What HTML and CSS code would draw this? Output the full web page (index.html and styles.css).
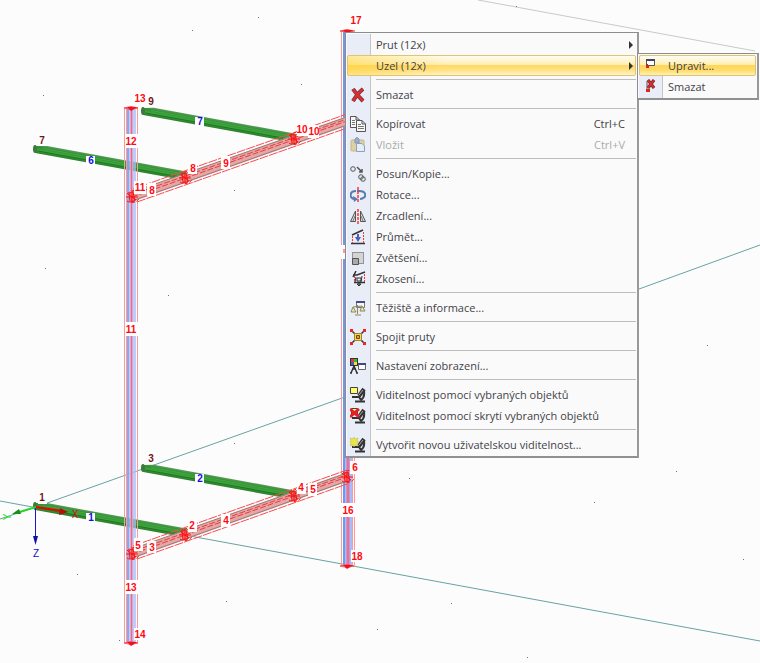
FILE: index.html
```html
<!DOCTYPE html>
<html lang="cs">
<head>
<meta charset="utf-8">
<title>Model</title>
<link rel="stylesheet" href="styles.css">
</head>
<body>
<main class="workspace">
<svg class="scene" viewBox="0 0 760 663" preserveAspectRatio="xMinYMin meet" role="img" aria-label="Model">
  <defs>
    <linearGradient id="tube" x1="0" y1="0" x2="0" y2="1">
      <stop offset="0" stop-color="#5c9c5c"/><stop offset=".3" stop-color="#2f8f2f"/><stop offset=".6" stop-color="#3fa53f"/><stop offset="1" stop-color="#2a782a"/>
    </linearGradient>
    <g id="member">
      <g transform="rotate(10.3)">
        <path d="M0-3 10-5H153V4H1Z" fill="url(#tube)"/>
        <path d="M3 1.500H152" stroke="#1b7b1b"/>
        <path d="M8-2H152" stroke="#43a843"/>
      </g>
      <ellipse cx="0" cy="0" rx="2" ry="4" fill="#3e7a3e"/>
    </g>
    <g id="node" fill="none" stroke="#ff1010">
      <path d="M-3-4 1-5 3 4-2 5Z" fill="#e03030" fill-opacity=".35"/>
      <path d="M-6 0H6M0-4V4M-4-3 4 3"/>
      <path d="M-5 4Q2 8 7 2M-5-3Q0-8 7-6" stroke-dasharray="3 2"/>
    </g>
    <g id="cap" fill="#f01020">
      <path d="M-7 0Q0-3 7 0Q0 3-7 0Z" fill="none" stroke="#ff5050"/>
      <path d="M-4-1H6L0 3Z"/>
    </g>
  </defs>

  <g fill="none" stroke="#68a2a2">
    <path d="M0 501 760 641"/><path d="M0 519 36 507 345 397 639 289 760 245"/>
    <path d="M478 0 755 51" stroke="#c9c9c9"/>
  </g>

  <use href="#member" x="35" y="149"/>
  <use href="#member" x="143" y="111"/>
  <use href="#member" x="35" y="506"/>
  <use href="#member" x="143" y="468"/>

  <g>
    <rect x="127" y="107" width="9" height="536" fill="#9fc0ff" fill-opacity=".75"/>
    <path d="M128 107V643" stroke="#7ba0ec" stroke-opacity=".8" stroke-width="2"/>
    <path d="M131.500 107V643" stroke="#f29ab8" stroke-opacity=".8" stroke-width="3"/>
    <path d="M131.500 107V643" stroke="#ed5979" stroke-opacity=".8"/>
    <path d="M124.500 107V643M126.500 107V643M137.500 107V643" stroke="#ff9999"/>
    <rect x="343" y="30" width="9" height="536" fill="#9fc0ff"/>
    <path d="M344 30V566" stroke="#6f98ea" stroke-width="2"/>
    <path d="M348 30V566" stroke="#ed6f96" stroke-width="3"/>
    <path d="M341.500 30V566M352.500 30V566M354.500 30V566" stroke="#ff9999"/>
  </g>

  <g fill="none">
    <path d="M132 197 347 121M132 554 347 477" stroke="#e5a6a6" stroke-width="9"/>
    <path d="M132 192 347 117M132 201 347 125M132 549 347 473M132 558 347 481" stroke="#977b7b"/>
    <path d="M133 189 347 114M137 202 347 128M133 546 347 470M137 559 347 484" stroke="#ff4a4a" stroke-dasharray="9 1"/>
    <path d="M132 197 347 121M132 554 347 477M134 194 347 119M134 551 347 475" stroke="#ec3a3a" stroke-dasharray="6 2"/>
  </g>
  <g>
    <use href="#node" x="132" y="197"/><use href="#node" x="185" y="178"/><use href="#node" x="294" y="139"/>
    <use href="#node" x="132" y="554"/><use href="#node" x="185" y="535"/><use href="#node" x="294" y="496"/><use href="#node" x="347" y="477"/>
    <use href="#cap" x="131" y="108"/><use href="#cap" x="131" y="643"/><use href="#cap" x="347" y="31"/><use href="#cap" x="347" y="566"/>
  </g>

  <g fill="none" stroke-width="2">
    <path d="M36 507 16 513" stroke="#2ad42a"/><path d="M12 514 19 509 21 514Z" fill="#189018" stroke="none"/>
    <path d="M36 507 62 511" stroke="#f00000"/><path d="M60 508 68 512 59 515Z" fill="#b01010" stroke="none"/>
    <path d="M35.500 508V538" stroke="#1818d0" stroke-width="1"/><path d="M33 536H38L35.500 545Z" fill="#1010b0" stroke="none"/>
  </g>
  <g class="axis-name">
    <text x="75" y="518" fill="#cc1010">X</text><text x="36" y="557" fill="#1010d0">Z</text>
    <text transform="translate(4 517) rotate(-90)" fill="#10e010" y="7">Y</text>
  </g>

  <g fill="#fff">
    <path d="M125 134h14v14h-14zM125 322h14v14h-14zM125 580h14v14h-14zM134 93h12v12h-12zM134 628h12v12h-12zM134 181h12v13h-12zM147 183h9v13h-9zM188 161h9v13h-9zM221 156h9v13h-9zM297 124h12v12h-12zM308 125h11v13h-11zM86 156h9v9h-9zM195 117h9v9h-9zM195 474h9v9h-9zM86 513h9v9h-9zM134 538h9v13h-9zM147 541h9v12h-9zM188 520h9v12h-9zM221 514h9v13h-9zM297 481h9v13h-9zM308 483h9v13h-9zM350 461h9v13h-9zM341 503h14v14h-14zM351 550h12v12h-12zM351 15h12v12h-12zM341 245h5v14h-5z"/>
    <path d="M38 134h9v12h-9zM147 95h9v12h-9zM38 492h9v12h-9zM147 452h9v12h-9z"/>
  </g>
  <path d="M344 249v4" stroke="#f33"/>
  <g class="tag tag-selected">
    <text x="356" y="24">17</text><text x="140" y="102">13</text><text x="131" y="145">12</text>
    <text x="140" y="191">11</text><text x="152" y="194">8</text><text x="193" y="172">8</text>
    <text x="226" y="167">9</text><text x="302" y="133">10</text><text x="314" y="135">10</text>
    <text x="131" y="333">11</text><text x="131" y="591">13</text><text x="140" y="638">14</text>
    <text x="138" y="549">5</text><text x="152" y="551">3</text><text x="192" y="529">2</text>
    <text x="226" y="524">4</text><text x="301" y="491">4</text><text x="313" y="493">5</text>
    <text x="355" y="471">6</text><text x="348" y="514">16</text><text x="357" y="560">18</text>
  </g>
  <g class="tag tag-node">
    <text x="42" y="144">7</text><text x="151" y="105">9</text><text x="42" y="501">1</text><text x="151" y="462">3</text>
  </g>
  <g class="tag tag-member">
    <text x="91" y="164">6</text><text x="200" y="125">7</text><text x="200" y="482">2</text><text x="91" y="521">1</text>
  </g>
  <path fill="#777" d="M43 95h1v1h-1zM168 295h1v1h-1zM45 268h1v1h-1zM234 443h1v1h-1zM77 574h1v1h-1zM119 640h1v1h-1zM226 601h1v1h-1zM258 17h1v1h-1zM301 84h1v1h-1zM409 478h1v1h-1zM707 345h1v1h-1zM594 502h1v1h-1zM676 471h1v1h-1zM451 603h1v1h-1zM377 629h1v1h-1zM527 657h1v1h-1zM743 559h1v1h-1zM192 30h1v1h-1zM234 190h1v1h-1zM516 6h1v1h-1z"/>
</svg>

<ul class="menu menu-main">
  <li><button class="item" type="button"><span class="icon"></span>Prut (12x)<span class="arrow"></span></button></li>
  <li><button class="item active" type="button"><span class="icon"></span>Uzel (12x)<span class="arrow"></span></button></li>
  <li class="sep"></li>
  <li><button class="item" type="button"><svg class="icon" viewBox="0 0 16 16"><path d="M3 2Q7 8 13 14M13 2Q8 6 3 14" stroke="#6d3033" stroke-width="4"/><path d="M3 2Q7 8 13 14M13 2Q8 6 3 14" stroke="#d82f37" stroke-width="2.500"/></svg>Smazat</button></li>
  <li class="sep"></li>
  <li><button class="item" type="button"><svg class="icon" viewBox="0 0 16 16"><g fill="#f8f8f8" stroke="#555"><path d="M.5.500H6L9.500 4V11.500H.5ZM6 .5V4H9.500"/><path d="M6.500 4.500H12L15.500 8V15.500H6.500ZM12 4.500V8H15.500"/></g><path d="M2 4.500H5M2 6.500H5M2 8.500H5M8 8.500H11M8 10.500H14M8 12.500H14" stroke="#777"/></svg>Kopírovat<kbd>Ctrl+C</kbd></button></li>
  <li><button class="item" type="button" disabled><svg class="icon" viewBox="0 0 16 16"><rect x="1" y="3" width="13" height="11" rx="1" fill="#ddd1a1" stroke="#c1b88f"/><path d="M5 6V2Q7-1 9 2V6Z" fill="#9caed4" stroke="#8293b7"/><path d="M6.500 6.500H12L14.500 9V14.500H6.500Z" fill="#e7edf7" stroke="#8ea0bb"/></svg>Vložit<kbd>Ctrl+V</kbd></button></li>
  <li class="sep"></li>
  <li><button class="item" type="button"><svg class="icon" viewBox="0 0 16 16"><g fill="none" stroke="#555"><circle cx="3" cy="3" r="2.300"/><circle cx="11" cy="11" r="2.300"/><circle cx="13" cy="13" r="2.300"/><path d="M7 1 12 6M12 3V6H9" stroke-width="1.500"/></g></svg>Posun/Kopie...</button></li>
  <li><button class="item" type="button"><svg class="icon" viewBox="0 0 16 16"><path d="M6 4C-1 4-1 12 5 12M7 4C18 3 17 12 10 12" fill="none" stroke="#547caf" stroke-width="2"/><path d="M3 9 8 12 4 15Z" fill="#547caf"/><path d="M8 0V16" stroke="#f33" stroke-width="1.500" stroke-dasharray="3 1"/></svg>Rotace...</button></li>
  <li><button class="item" type="button"><svg class="icon" viewBox="0 0 16 16"><path d="M5.500 3V13.500H.5ZM10.500 3V13.500H15.500Z" fill="#ddd" stroke="#555"/><path d="M3 13 5 8M13 13 11 8" stroke="#777"/><path d="M8 1V16" stroke="#f33" stroke-width="1.500" stroke-dasharray="3 1"/></svg>Zrcadlení...</button></li>
  <li><button class="item" type="button"><svg class="icon" viewBox="0 0 16 16"><path d="M2 6 13 1M1 14.500H15" stroke="#333" stroke-width="1.500"/><path d="M2.500 7V14M13.500 3V14" stroke="#f33" stroke-dasharray="2 1"/><path d="M7 5H9V8H11L8 13 5 8H7Z" fill="#4263b5"/></svg>Průmět...</button></li>
  <li><button class="item" type="button"><svg class="icon" viewBox="0 0 16 16"><path d="M2.500 2.500H13.500V13.500H2.500Z" fill="#d4d4d4" stroke="#444" stroke-dasharray="1 1"/><path d="M2.500 8.500H8.500V14.500H2.500Z" fill="#aaa" stroke="#555"/></svg>Zvětšení...</button></li>
  <li><button class="item" type="button"><svg class="icon" viewBox="0 0 16 16"><g stroke="#333" fill="none"><path d="M3 4H7L15 1M6 0 3 6M4 11.500H15" stroke-width="1.500"/><path d="M9 11V15M7 13H11L9 15Z"/><path d="M6 6 5 11M12 5 11 11M7 7H11V10H7Z"/></g><path d="M4.500 5V11M14.500 3V11" stroke="#f33" stroke-dasharray="2 1"/></svg>Zkosení...</button></li>
  <li class="sep"></li>
  <li><button class="item" type="button"><svg class="icon" viewBox="0 0 16 16"><path d="M6.500 1.500H14.500V7.500H6.500Z" fill="#f7f7fa" stroke="#777"/><path d="M6 2H15" stroke="#464b87" stroke-width="2"/><g fill="#eee7ba" stroke="#8d875d"><path d="M3 7 12 6M7.500 5V14M5 15H11M3 7 1 12H6ZM12 6 10 11H15Z"/></g></svg>Těžiště a informace...</button></li>
  <li class="sep"></li>
  <li><button class="item" type="button"><svg class="icon" viewBox="0 0 16 16"><path d="M2 2 14 14M14 2 2 14" stroke="#333" stroke-width="1.500"/><path d="M0 0H3V3H0ZM13 0H16V3H13ZM0 13H3V16H0ZM13 13H16V16H13Z" fill="#ed2424"/><path d="M4.500 4.500H11.500V11.500H4.500Z" fill="#ffd93b" stroke="#998440"/><path d="M6.500 6.500H9.500V9.500H6.500Z" fill="#dca226" stroke="#664c20"/></svg>Spojit pruty</button></li>
  <li class="sep"></li>
  <li><button class="item" type="button"><svg class="icon" viewBox="0 0 16 16"><path d="M0 0H8V8H0Z" fill="#333"/><path d="M1 1H4V4H1Z" fill="#e33"/><path d="M4 1H7V4H4Z" fill="#3b3"/><path d="M1 4H4V7H1Z" fill="#36c"/><path d="M4 4H7V7H4Z" fill="#fd2"/><path d="M4 8 1 15M4 8 7 15M2 11H6M0 15H2M6 15H8" stroke="#333" stroke-width="1.500"/><path d="M8.500 5.500H15.500V11.500H8.500Z" fill="#fff" stroke="#666"/><path d="M8 6H16" stroke="#424884" stroke-width="2"/></svg>Nastavení zobrazení...</button></li>
  <li class="sep"></li>
  <li><button class="item" type="button"><svg class="icon" viewBox="0 0 16 16"><path d="M14 2 9 9" stroke="#333" stroke-width="4"/><path d="M14 4Q15 10 11 13M5 14.500H15M2 10H9L11 13" stroke="#333" stroke-width="2"/><path d="M13 3 9 8" stroke="#aaa"/><path d="M.5.500H7.500V6.500H.5Z" fill="#ffff68" stroke="#444"/></svg>Viditelnost pomocí vybraných objektů</button></li>
  <li><button class="item" type="button"><svg class="icon" viewBox="0 0 16 16"><path d="M14 2 9 9" stroke="#333" stroke-width="4"/><path d="M14 4Q15 10 11 13M5 14.500H15M2 10H9L11 13" stroke="#333" stroke-width="2"/><path d="M13 3 9 8" stroke="#aaa"/><path d="M1.500.5H7.500V6.500H1.500Z" fill="#ffff68" stroke="#444"/><path d="M0 1 9 9M9 1 0 9" stroke="#e52025" stroke-width="3"/></svg>Viditelnost pomocí skrytí vybraných objektů</button></li>
  <li class="sep"></li>
  <li><button class="item" type="button"><svg class="icon" viewBox="0 0 16 16"><path d="M14 2 9 9" stroke="#333" stroke-width="4"/><path d="M14 4Q15 10 11 13M5 14.500H15M2 10H9L11 13" stroke="#333" stroke-width="2"/><path d="M13 3 9 8" stroke="#aaa"/><path d="M4 0 5 2 8 1 7 4 9 5 7 6 8 9 5 8 4 10 3 8 0 9 1 6 0 5 1 4 0 1 3 2Z" fill="#e9e64a" stroke="#b9b64b" stroke-width=".5"/></svg>Vytvořit novou uživatelskou viditelnost...</button></li>
</ul>

<ul class="menu menu-sub">
  <li><button class="item active" type="button"><svg class="icon" viewBox="0 0 16 16"><path d="M4.500 1.500H12.500V7.500H4.500Z" fill="#fff" stroke="#555"/><path d="M4 2H13" stroke="#3e4272" stroke-width="2"/><path d="M5 6V9" stroke="#555" stroke-width="2"/><path d="M4 7H7V10H4Z" fill="#d72222"/></svg>Upravit...</button></li>
  <li><button class="item" type="button"><svg class="icon" viewBox="0 0 16 16"><path d="M6 1 12 9M12 1 6 9" stroke="#5d2023" stroke-width="3"/><path d="M6 1 12 9M12 1 6 9" stroke="#d92d34" stroke-width="2"/><path d="M5 2V10" stroke="#555"/><path d="M4 10H8V13H4Z" fill="#e52222"/></svg>Smazat</button></li>
</ul>
</main>
</body>
</html>
```
FILE: styles.css
```css
* {
  box-sizing: border-box;
}

body {
  margin: 0;
  background: #fcfcfc;
  font-family: "Open Sans", "Noto Sans", sans-serif;
  font-size: 11px;
}

.workspace {
  position: relative;
  min-height: 100vh;
  overflow: hidden;
}

.scene {
  display: block;
  width: 100%;
  height: 100vh;
}

.tag {
  font: bold 10px "Liberation Sans", sans-serif;
  text-anchor: middle;
}

.tag-selected { fill: #ff0810; }
.tag-node { fill: #74151a; }
.tag-member { fill: #1010e0; }

.axis-name {
  font: 10px "Liberation Sans", sans-serif;
  text-anchor: middle;
}

/* Menus float over the model at the point where they were opened. */
.menu {
  position: absolute;
  margin: 0;
  padding: 1px;
  list-style: none;
  border: 1px solid #8c8c8c;
  border-right: 2px solid #999;
  border-bottom: 2px solid #909090;
  background: linear-gradient(90deg, #e8edf7 23px, #c5c5c5 23px, #c5c5c5 24px, #fafafa 24px) 1px 1px no-repeat #fafafa;
}

.menu-main {
  top: 32px;
  left: 345px;
  width: 294px;
}

.menu-sub {
  top: 53px;
  left: 637px;
  width: 122px;
  padding: 1px;
}

.item {
  display: flex;
  align-items: center;
  width: 100%;
  height: 21px;
  padding: 0 2px;
  border: 1px solid transparent;
  border-radius: 2px;
  background: none;
  color: #434349;
  font: inherit;
  line-height: 16px;
  text-align: left;
  white-space: nowrap;
}

.item:disabled {
  color: #aaa;
}

.active {
  border-color: #ddc478;
  background: linear-gradient(#fffdf2, #ffeeb5 45%, #ffd657 50%, #ffdc6b 75%, #fff0b5);
}

.menu-main .active {
  background: linear-gradient(90deg, rgb(255 208 40 / 45%), transparent 35%), linear-gradient(#fffdf2, #ffeeb5 45%, #ffd966 50%, #ffe28a 75%, #fff4c8);
}

.icon {
  flex: none;
  width: 16px;
  height: 16px;
  margin-right: 10px;
  fill: none;
}

.arrow {
  margin-left: auto;
  border: 4px solid transparent;
  border-right: 0;
  border-left-color: #333;
}

kbd {
  margin-left: auto;
  padding-right: 8px;
  font: inherit;
}

.sep {
  height: 8px;
  padding: 3px 0 0 29px;
}

.sep::before {
  content: "";
  display: block;
  height: 1px;
  background: #bcbcbc;
}
```
